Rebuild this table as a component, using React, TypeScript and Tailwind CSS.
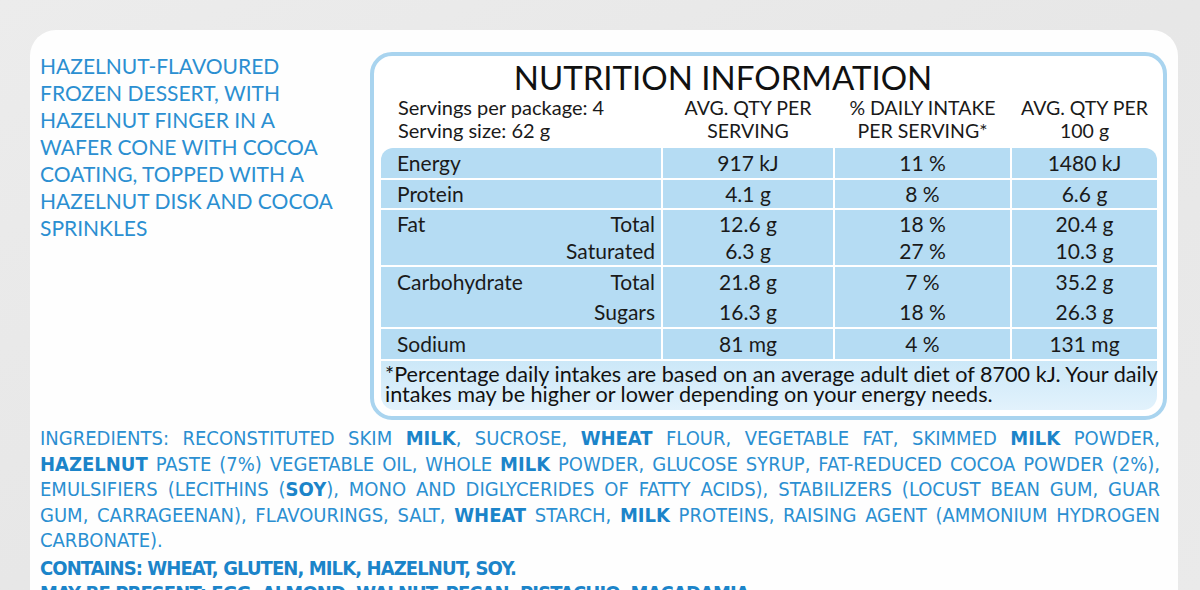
import React from 'react';

const rows = [
  { label: 'Energy', subs: [''], serving: ['917 kJ'], daily: ['11 %'], per100: ['1480 kJ'], h: 'h-[30px]', lh: 'leading-[30px]' },
  { label: 'Protein', subs: [''], serving: ['4.1 g'], daily: ['8 %'], per100: ['6.6 g'], h: 'h-[28px]', lh: 'leading-[28px]' },
  { label: 'Fat', subs: ['Total', 'Saturated'], serving: ['12.6 g', '6.3 g'], daily: ['18 %', '27 %'], per100: ['20.4 g', '10.3 g'], h: 'h-[55px]', lh: 'leading-[27px]' },
  { label: 'Carbohydrate', subs: ['Total', 'Sugars'], serving: ['21.8 g', '16.3 g'], daily: ['7 %', '18 %'], per100: ['35.2 g', '26.3 g'], h: 'h-[60px]', lh: 'leading-[30px]' },
  { label: 'Sodium', subs: [''], serving: ['81 mg'], daily: ['4 %'], per100: ['131 mg'], h: 'h-[30px]', lh: 'leading-[30px]' },
];

const descLines = [
  'HAZELNUT-FLAVOURED',
  'FROZEN DESSERT, WITH',
  'HAZELNUT FINGER IN A',
  'WAFER CONE WITH COCOA',
  'COATING, TOPPED WITH A',
  'HAZELNUT DISK AND COCOA',
  'SPRINKLES',
];

const B: React.FC<{ children: React.ReactNode }> = ({ children }) => (
  <span className="font-bold text-[#1b84c9]">{children}</span>
);

const NutritionTable: React.FC = () => {
  return (
    <div className="w-[797px] shrink-0 rounded-[22px] border-4 border-[#a9d4ef] bg-white px-[7px] pb-[6px] pr-[6px]">
      {/* Title, sits a bit left of centre on the pack */}
      <h1 className="pt-[4px] pr-[92px] text-center text-[33px] leading-[34px] text-[#111]">NUTRITION INFORMATION</h1>

      {/* Column headers */}
      <div className="mt-[2px] mb-[6px] grid grid-cols-[280px_170px_175px_1fr] gap-x-[2px] leading-[23px] text-[#1a1a1a]">
        <div className="pl-[17px] text-[20px]">
          <div>Servings per package: 4</div>
          <div>Serving size: 62 g</div>
        </div>
        <div className="text-center text-[19.5px]">
          <div>AVG. QTY PER</div>
          <div>SERVING</div>
        </div>
        <div className="text-center text-[19.5px]">
          <div>% DAILY INTAKE</div>
          <div>PER SERVING*</div>
        </div>
        <div className="text-center text-[19.5px]">
          <div>AVG. QTY PER</div>
          <div>100 g</div>
        </div>
      </div>

      {/* Rows */}
      <div className="flex flex-col gap-y-[2px] text-[21px] text-[#1a1a1a]">
        {rows.map((r, i) => (
          <div key={r.label} className={`grid grid-cols-[280px_170px_175px_1fr] gap-x-[2px] ${r.h} ${r.lh}`}>
            <div className={`flex justify-between bg-[#b5dcf3] pl-[16px] pr-[6px] ${i === 0 ? 'rounded-tl-[12px]' : ''}`}>
              <span>{r.label}</span>
              <div className="text-right">
                {r.subs.map((s, j) => (
                  <div key={j}>{s}</div>
                ))}
              </div>
            </div>
            <div className="bg-[#b5dcf3] text-center">
              {r.serving.map((v) => (
                <div key={v}>{v}</div>
              ))}
            </div>
            <div className="bg-[#b5dcf3] text-center">
              {r.daily.map((v, j) => (
                <div key={j}>{v}</div>
              ))}
            </div>
            <div className={`bg-[#b5dcf3] text-center ${i === 0 ? 'rounded-tr-[12px]' : ''}`}>
              {r.per100.map((v) => (
                <div key={v}>{v}</div>
              ))}
            </div>
          </div>
        ))}

        {/* Footnote */}
        <div className="h-[49px] rounded-b-[14px] bg-gradient-to-b from-[#cce8f8] to-[#e2f2fc] px-[4px] pt-[4px] text-[21.6px] leading-[19.5px] text-[#111]">
          <div className="whitespace-nowrap">*Percentage daily intakes are based on an average adult diet of 8700 kJ. Your daily</div>
          <div className="whitespace-nowrap">intakes may be higher or lower depending on your energy needs.</div>
        </div>
      </div>
    </div>
  );
};

const App: React.FC = () => {
  return (
    <div className="h-[590px] overflow-hidden bg-gradient-to-br from-[#ececec] via-[#e7e7e7] to-[#eaeaea] pt-[30px] pl-[30px] pr-[22px] font-['Lato',sans-serif]">
      <div className="rounded-t-[26px] bg-[#fefefe] pt-[22px] pl-[10px] pr-[11px]">
        {/* Top section */}
        <div className="flex items-start">
          <div className="w-[330px] shrink-0 text-[21px] leading-[27px] text-[#2b8fd1]">
            {descLines.map((l) => (
              <div key={l} className="whitespace-nowrap">{l}</div>
            ))}
          </div>
          <NutritionTable />
        </div>

        {/* Ingredients */}
        <div className="mt-[6px] pr-[7px] font-['Liberation_Sans_Narrow','DejaVu_Sans_Condensed',sans-serif] text-[20px] leading-[25.5px] text-[#2b8fd1]">
          <div className="whitespace-nowrap text-justify [text-align-last:justify]">
            INGREDIENTS: RECONSTITUTED SKIM <B>MILK</B>, SUCROSE, <B>WHEAT</B> FLOUR, VEGETABLE FAT, SKIMMED <B>MILK</B> POWDER,
          </div>
          <div className="whitespace-nowrap text-justify [text-align-last:justify]">
            <B>HAZELNUT</B> PASTE (7%) VEGETABLE OIL, WHOLE <B>MILK</B> POWDER, GLUCOSE SYRUP, FAT-REDUCED COCOA POWDER (2%),
          </div>
          <div className="whitespace-nowrap text-justify [text-align-last:justify]">
            EMULSIFIERS (LECITHINS (<B>SOY</B>), MONO AND DIGLYCERIDES OF FATTY ACIDS), STABILIZERS (LOCUST BEAN GUM, GUAR
          </div>
          <div className="whitespace-nowrap text-justify [text-align-last:justify]">
            GUM, CARRAGEENAN), FLAVOURINGS, SALT, <B>WHEAT</B> STARCH, <B>MILK</B> PROTEINS, RAISING AGENT (AMMONIUM HYDROGEN
          </div>
          <div>CARBONATE).</div>
          <div className="mt-[2px] font-bold tracking-[-0.9px] text-[#1b84c9]">CONTAINS: WHEAT, GLUTEN, MILK, HAZELNUT, SOY.</div>
          <div className="font-bold tracking-[-0.9px] text-[#1b84c9]">MAY BE PRESENT: EGG, ALMOND, WALNUT, PECAN, PISTACHIO, MACADAMIA.</div>
        </div>
      </div>
    </div>
  );
};

export default App;
